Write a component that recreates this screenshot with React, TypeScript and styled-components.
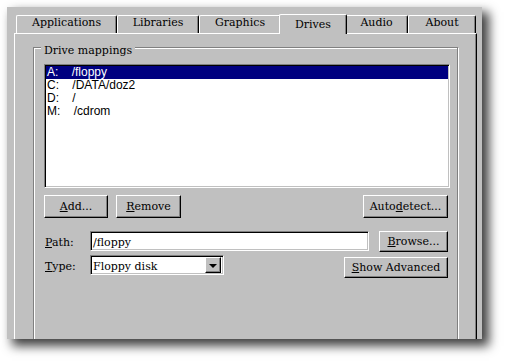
import React from 'react';
import styled, { createGlobalStyle } from 'styled-components';

const GlobalStyle = createGlobalStyle`
  body {
    margin: 0;
    background: #fff;
  }
`;

const Stage = styled.div`
  width: 505px;
  height: 362px;
  padding: 7px;
  box-sizing: border-box;
`;

const Window = styled.div`
  width: 475px;
  height: 332px;
  background: #c0c0c0;
  overflow: hidden;
  box-shadow: 6px 6px 10px 1px rgba(0, 0, 0, 0.75);
  font-family: 'DejaVu Serif', serif;
  font-size: 11px;
  color: #000;
`;

const TabRow = styled.div`
  display: flex;
  align-items: flex-end;
  height: 26px;
  padding-left: 9px;
`;

const Tab = styled.div<{ w: number; active?: boolean }>`
  position: relative;
  z-index: ${(p) => (p.active ? 1 : 0)};
  box-sizing: border-box;
  width: ${(p) => p.w + (p.active ? 4 : 0)}px;
  height: ${(p) => (p.active ? 20 : 18)}px;
  margin: ${(p) => (p.active ? '0 -2px -1px' : '0')};
  padding-top: ${(p) => (p.active ? 3 : 0)}px;
  background: #c0c0c0;
  border-top: 1px solid #fff;
  border-left: 1px solid #fff;
  border-right: 1px solid #000;
  border-radius: 2px 2px 0 0;
  box-shadow: inset -1px 0 #808080;
  line-height: 13px;
  text-align: center;
`;

const Panel = styled.div`
  box-sizing: border-box;
  width: 463px;
  height: 330px;
  margin-left: 7px;
  padding: 13px 0 0 18px;
  border-top: 1px solid #fff;
  border-left: 1px solid #fff;
  border-right: 1px solid #000;
  box-shadow: inset -1px 0 #808080;
`;

const GroupBox = styled.div`
  position: relative;
  box-sizing: border-box;
  width: 425px;
  height: 320px;
  padding: 16px 7px 0 10px;
  border: 1px solid #808080;
  box-shadow: inset 1px 1px #fff, 1px 1px #fff;
`;

const Legend = styled.span`
  position: absolute;
  top: -4px;
  left: 7px;
  padding: 0 3px;
  background: #c0c0c0;
  line-height: 13px;
`;

const ListBox = styled.div`
  box-sizing: border-box;
  height: 124px;
  padding: 1px;
  background: #fff;
  border: 1px solid;
  border-color: #808080 #fff #fff #808080;
  box-shadow: inset 1px 1px #000, inset -1px -1px #c0c0c0;
  font-family: 'Liberation Sans', Arial, sans-serif;
  font-size: 12px;
`;

const ListRow = styled.div<{ selected?: boolean }>`
  height: 13px;
  line-height: 13px;
  padding-left: 1px;
  white-space: pre;
  background: ${(p) => (p.selected ? '#000080' : 'transparent')};
  color: ${(p) => (p.selected ? '#fff' : '#000')};
`;

const ButtonRow = styled.div`
  display: flex;
  gap: 8px;
  margin-top: 7px;
  padding-right: 2px;
`;

const Button = styled.div<{ w: number; h?: number; push?: boolean; drop?: number }>`
  box-sizing: border-box;
  width: ${(p) => p.w}px;
  height: ${(p) => p.h ?? 23}px;
  margin-left: ${(p) => (p.push ? 'auto' : '0')};
  margin-top: ${(p) => p.drop ?? 0}px;
  display: flex;
  align-items: center;
  justify-content: center;
  background: #c0c0c0;
  border: 1px solid;
  border-color: #fff #000 #000 #fff;
  box-shadow: inset -1px -1px #808080;
  white-space: pre;
`;

const Key = styled.span`
  text-decoration: underline;
`;

const FormRow = styled.div<{ top: number }>`
  display: flex;
  align-items: flex-start;
  margin-top: ${(p) => p.top}px;
  padding-right: 2px;
`;

const Label = styled.div`
  width: 46px;
  padding-left: 1px;
  box-sizing: border-box;
  line-height: 13px;
  padding-top: 5px;
`;

const Field = styled.div<{ w: number }>`
  position: relative;
  box-sizing: border-box;
  width: ${(p) => p.w}px;
  height: 20px;
  padding: 4px 0 0 2px;
  background: #fff;
  border: 1px solid;
  border-color: #808080 #fff #fff #808080;
  box-shadow: inset 1px 1px #000, inset -1px -1px #c0c0c0;
  line-height: 13px;
  white-space: pre;
`;

const ComboField = styled(Field)`
  display: flex;
  justify-content: space-between;
  padding: 0 2px 0 2px;
  align-items: flex-start;
`;

const ComboText = styled.span`
  padding-top: 4px;
`;

const ArrowButton = styled.div`
  box-sizing: border-box;
  width: 16px;
  height: 16px;
  margin-top: 1px;
  display: flex;
  align-items: center;
  justify-content: center;
  background: #c0c0c0;
  border: 1px solid;
  border-color: #fff #000 #000 #fff;
  box-shadow: inset -1px -1px #808080;

  &::after {
    content: '';
    border-left: 4px solid transparent;
    border-right: 4px solid transparent;
    border-top: 4px solid #000;
    margin-top: 1px;
  }
`;

const tabs = [
  { label: 'Applications', w: 101 },
  { label: 'Libraries', w: 82 },
  { label: 'Graphics', w: 82 },
  { label: 'Drives', w: 64, active: true },
  { label: 'Audio', w: 63 },
  { label: 'About', w: 68 },
];

const drives = [
  { text: 'A:    /floppy', selected: true },
  { text: 'C:    /DATA/doz2' },
  { text: 'D:    /' },
  { text: 'M:    /cdrom' },
];

export default function App() {
  return (
    <Stage>
      <GlobalStyle />
      <Window>
        <TabRow>
          {tabs.map((t) => (
            <Tab key={t.label} w={t.w} active={t.active}>
              {t.label}
            </Tab>
          ))}
        </TabRow>
        <Panel>
          <GroupBox>
            <Legend>Drive mappings</Legend>
            <ListBox>
              {drives.map((d) => (
                <ListRow key={d.text} selected={d.selected}>
                  {d.text}
                </ListRow>
              ))}
            </ListBox>
            <ButtonRow>
              <Button w={64}>
                <Key>A</Key>dd...
              </Button>
              <Button w={65}>
                <Key>R</Key>emove
              </Button>
              <Button w={85} push>
                Auto<Key>d</Key>etect...
              </Button>
            </ButtonRow>
            <FormRow top={13}>
              <Label>
                <Key>P</Key>ath:
              </Label>
              <Field w={279}>/floppy</Field>
              <Button w={69} h={21} push>
                <Key>B</Key>rowse...
              </Button>
            </FormRow>
            <FormRow top={3}>
              <Label>
                <Key>T</Key>ype:
              </Label>
              <ComboField w={134}>
                <ComboText>Floppy disk</ComboText>
                <ArrowButton />
              </ComboField>
              <Button w={104} h={21} push drop={2}>
                <Key>S</Key>how Advanced
              </Button>
            </FormRow>
          </GroupBox>
        </Panel>
      </Window>
    </Stage>
  );
}
